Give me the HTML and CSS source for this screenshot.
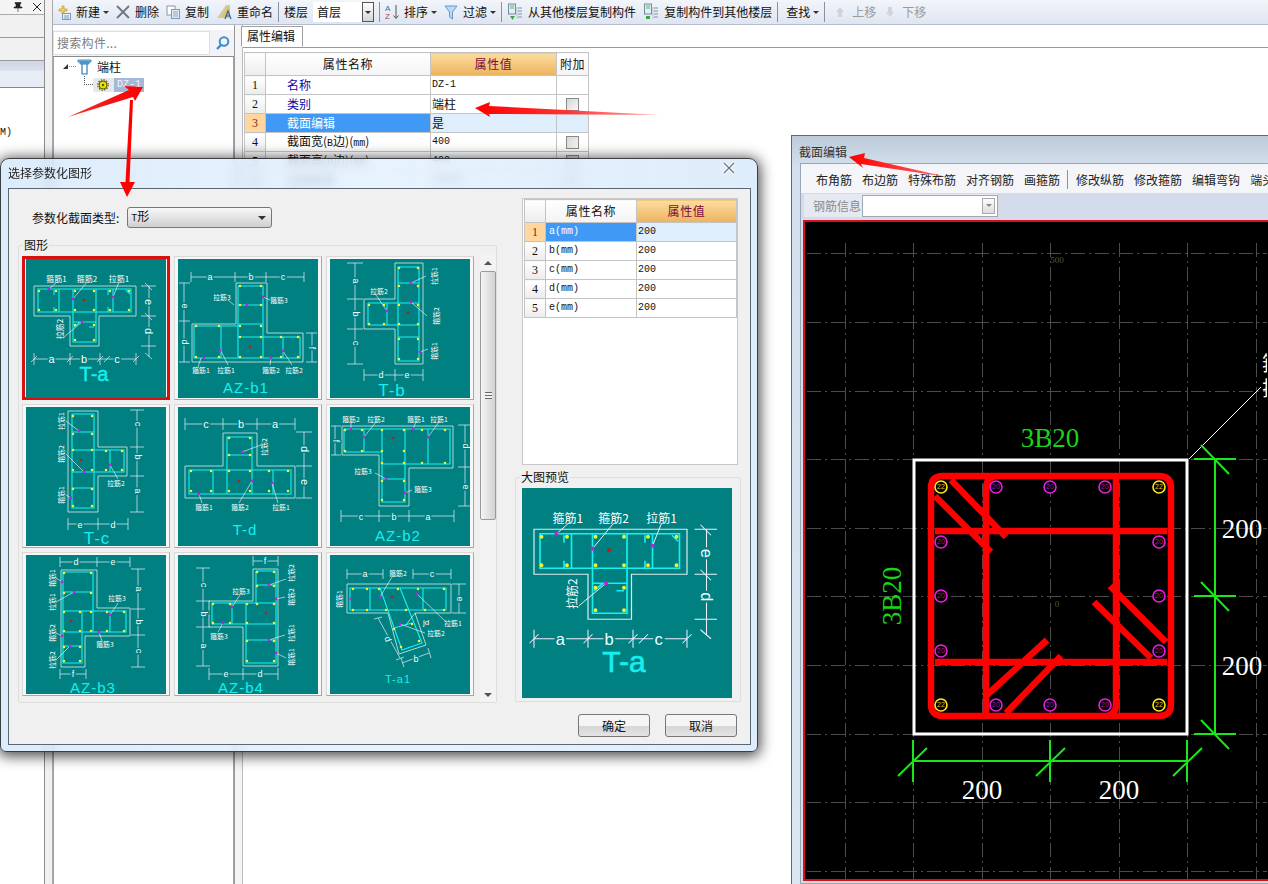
FILE: index.html
```html
<!DOCTYPE html>
<html lang="zh-CN">
<head>
<meta charset="utf-8">
<title>选择参数化图形</title>
<link rel="stylesheet" href="styles.css">
</head>
<body>
<svg class="defs" width="0" height="0">
  <defs>
    <linearGradient id="arrowA" gradientUnits="userSpaceOnUse" x1="68" y1="117" x2="143" y2="87"><stop offset="0" stop-color="#f33"/><stop offset=".5" stop-color="#f01818"/><stop offset="1" stop-color="#f00"/></linearGradient>
    <linearGradient id="arrowB" gradientUnits="userSpaceOnUse" x1="660" y1="115" x2="475" y2="108"><stop offset="0" stop-color="#ffb0b0"/><stop offset=".5" stop-color="#f33"/><stop offset="1" stop-color="#f00"/></linearGradient>
    <linearGradient id="arrowC" gradientUnits="userSpaceOnUse" x1="947" y1="177" x2="849" y2="157"><stop offset="0" stop-color="#f66"/><stop offset="1" stop-color="#f00"/></linearGradient>

    <symbol id="t-a" viewBox="0 0 140 139">
      <path class="o" d="M8 27H110V57H73V87H44V57H8Z"/>
      <path class="r" d="M12 30H105V53H12ZM47 30V83H70V30M47 63H70M33 30V53M87 30V53M28 31V36M28 48V53M82 31V36M82 48V53M100 31L104 35M54 63L48 68M63 68H68"/>
      <path class="yd" d="M13 32h0M30 32h0M49 32h0M68 32h0M84 32h0M103 32h0M13 51h0M30 51h0M49 51h0M68 51h0M84 51h0M103 51h0M49 66h0M68 66h0M49 81h0M68 81h0"/>
      <path class="ld" d="M23 30L31 23M47 40L61 23M87 38L93 23M38 78L56 63"/>
      <path class="pd" d="M23 30h0M47 40h0M87 38h0M56 63h0"/>
      <path class="rd" d="M58 41h0"/>
      <path class="d" d="M8 100H110M8 94V106M44 94V106M74 94V106M110 94V106M5 103L11 97M41 103L47 97M71 103L77 97M78 103L84 97M107 103L113 97M123 27V98M115 27H130M115 57H130M115 87H130M119 24L126 31M119 54L126 61M119 94L126 100"/>
      <text class="l big" x="25.5" y="100">a</text><text class="l big" x="58" y="100">b</text><text class="l big" x="91" y="100">c</text>
      <text class="l big" x="123" y="43" transform="rotate(90 123 43)">e</text><text class="l big" x="123" y="72" transform="rotate(90 123 72)">d</text>
      <text class="tx" x="30.5" y="19">箍筋1</text><text class="tx" x="61" y="19">箍筋2</text><text class="tx" x="93" y="19">拉筋1</text>
      <text class="tx" x="33" y="70" transform="rotate(-90 33 70)">拉筋2</text>
      <text class="ti ti-l" x="68" y="115">T-a</text>
    </symbol>

    <symbol id="az-b1" viewBox="0 0 140 139">
      <path class="o" d="M14 65H58V24H89V74H125V103H14Z"/>
      <path class="r" d="M16 67H43V99H16ZM43 99H122V78H60M60 27H85V99M60 27V99M60 46H85M60 65H85M85 78H122M105 78V99M43 67H60"/>
      <path class="yd" d="M18 67h0M41 67h0M62 67h0M83 67h0M62 27h0M83 27h0M62 46h0M83 46h0M62 78h0M83 78h0M18 98h0M41 98h0M62 98h0M83 98h0M103 78h0M120 78h0M103 98h0M120 98h0"/>
      <path class="ld" d="M23 99L20 108M43 92L50 106M93 99L92 106M105 92L114 106M56 46L50 41M85 38L92 41"/>
      <path class="pd" d="M26 99h0M42 92h0M93 99h0M105 92h0M69 46h0M85 38h0"/>
      <path class="rd" d="M72 88h0"/>
      <path class="d" d="M13 18H126M13 13V23M57 13V23M88 13V23M126 13V23M6 24V103M1 24H12M1 62H12M1 103H12M134 74V103M128 74H139M128 103H139"/>
      <text class="l" x="32" y="18">a</text><text class="l" x="73" y="18">b</text><text class="l" x="105" y="18">c</text>
      <text class="l" x="7" y="47" transform="rotate(90 7 47)">e</text><text class="l" x="7" y="83" transform="rotate(90 7 83)">d</text><text class="l" x="134" y="89" transform="rotate(90 134 89)">f</text>
      <text class="tx s" x="23" y="111">箍筋1</text><text class="tx s" x="48" y="111">拉筋1</text><text class="tx s" x="93" y="111">箍筋2</text><text class="tx s" x="116" y="111">拉筋2</text><text class="tx s" x="44" y="38">拉筋3</text><text class="tx s" x="101" y="41">箍筋3</text>
      <text class="ti" x="68" y="128">AZ-b1</text>
    </symbol>

    <symbol id="t-b" viewBox="0 0 140 139">
      <path class="o" d="M65 4H93V105H65V70H34V40H65Z"/>
      <path class="r" d="M68 8H89V102H68ZM68 24H89M68 44H89M68 66H89M68 78H89M38 44H68M38 66H68M38 44V66M57 44V66"/>
      <path class="yd" d="M69 9h0M88 9h0M69 27h0M88 27h0M69 46h0M88 46h0M69 65h0M88 65h0M69 80h0M88 80h0M69 100h0M88 100h0M39 46h0M54 46h0M39 65h0M54 65h0"/>
      <path class="ld" d="M81 24L96 17M81 43L97 57M90 93L98 90M46 36L57 52"/>
      <path class="pd" d="M81 24h0M81 43h0M90 93h0M57 52h0"/>
      <path class="rd" d="M78 54h0"/>
      <path class="d" d="M25 4V105M17 4H33M17 40H33M17 70H33M17 105H33M34 116H93M34 110V122M65 110V122M93 110V122"/>
      <text class="l" x="26" y="22" transform="rotate(90 26 22)">a</text><text class="l" x="26" y="55" transform="rotate(90 26 55)">b</text><text class="l" x="26" y="84" transform="rotate(90 26 84)">c</text><text class="l" x="51" y="116">d</text><text class="l" x="77" y="116">e</text>
      <text class="tx s" x="104" y="17" transform="rotate(-90 104 17)">拉筋1</text><text class="tx s" x="49" y="32">拉筋2</text><text class="tx s" x="106" y="57" transform="rotate(-90 106 57)">箍筋2</text><text class="tx s" x="104" y="92" transform="rotate(-90 104 92)">箍筋1</text>
      <text class="ti ti-m" x="62" y="131">T-b</text>
    </symbol>

    <symbol id="t-c" viewBox="0 0 140 139">
      <path class="o" d="M42 4H72V40H101V69H72V105H42Z"/>
      <path class="r" d="M46 7H68V101H46ZM46 25H68M46 43H98V65H46ZM46 81H68M84 43V65M68 43V65"/>
      <path class="yd" d="M47 9h0M66 9h0M47 27h0M66 27h0M47 43h0M66 43h0M47 63h0M66 63h0M47 82h0M66 82h0M47 99h0M66 99h0M80 44h0M96 44h0M80 63h0M96 63h0"/>
      <path class="ld" d="M40 14L53 24M40 47L58 65M40 88L45 91M84 58L92 72"/>
      <path class="pd" d="M53 24h0M58 65h0M45 91h0M84 58h0"/>
      <path class="rd" d="M55 53h0"/>
      <path class="d" d="M111 3V105M104 3H118M104 40H118M104 69H118M104 105H118M42 117H102M42 111V123M72 111V123M102 111V123"/>
      <text class="l" x="112" y="17" transform="rotate(90 112 17)">c</text><text class="l" x="112" y="50" transform="rotate(90 112 50)">b</text><text class="l" x="112" y="84" transform="rotate(90 112 84)">a</text><text class="l" x="54" y="118">e</text><text class="l" x="87" y="118">d</text>
      <text class="tx s" x="35" y="14" transform="rotate(-90 35 14)">拉筋1</text><text class="tx s" x="35" y="47" transform="rotate(-90 35 47)">箍筋2</text><text class="tx s" x="35" y="88" transform="rotate(-90 35 88)">箍筋1</text><text class="tx s" x="90" y="76">拉筋2</text>
      <text class="ti ti-m" x="71" y="131">T-c</text>
    </symbol>

    <symbol id="t-d" viewBox="0 0 140 139">
      <path class="o" d="M45 26H79V59H117V91H7V59H45Z"/>
      <path class="r" d="M49 30H74V87H49ZM49 48H74M11 63H113V87H11ZM35 63V87M95 63V87"/>
      <path class="yd" d="M51 31h0M72 31h0M51 48h0M72 48h0M13 64h0M33 64h0M51 64h0M72 64h0M91 64h0M110 64h0M13 84h0M33 84h0M51 84h0M72 84h0M91 84h0M110 84h0"/>
      <path class="ld" d="M64 45L83 38M21 87L24 96M74 74L61 96M94 76L100 96"/>
      <path class="pd" d="M21 87h0M74 74h0M64 45h0M94 76h0"/>
      <path class="rd" d="M61 74h0"/>
      <path class="d" d="M7 17H117M7 11V23M45 11V23M79 11V23M117 11V23M126 25V91M118 25H134M118 59H134M118 91H134"/>
      <text class="l big" x="28" y="17">c</text><text class="l big" x="63" y="17">b</text><text class="l big" x="97" y="17">a</text><text class="l big" x="127" y="42" transform="rotate(90 127 42)">d</text><text class="l big" x="127" y="75" transform="rotate(90 127 75)">e</text>
      <text class="tx s" x="26" y="100">箍筋1</text><text class="tx s" x="62" y="100">箍筋2</text><text class="tx s" x="103" y="100">拉筋1</text><text class="tx s" x="86" y="40" transform="rotate(-90 86 40)">拉筋2</text>
      <text class="ti ti-s" x="67" y="122">T-d</text>
    </symbol>

    <symbol id="az-b2" viewBox="0 0 140 139">
      <path class="o" d="M12 19H123V61H79V99H49V48H12Z"/>
      <path class="r" d="M14 22H120V57H52V45H14ZM52 22V95H75V22M34 22V45M98 22V57M52 72H75M52 95H75"/>
      <path class="yd" d="M15 23h0M32 23h0M52 23h0M74 23h0M92 23h0M115 23h0M15 44h0M32 44h0M52 44h0M74 44h0M52 56h0M74 56h0M92 56h0M115 56h0M52 74h0M74 74h0M52 93h0M74 93h0"/>
      <path class="ld" d="M21 22L21 15M34 30L46 15M83 22L86 15M98 30L109 15M45 66L56 72M75 86L82 83"/>
      <path class="pd" d="M21 22h0M34 30h0M83 22h0M98 30h0M56 72h0M75 86h0"/>
      <path class="rd" d="M63 31h0"/>
      <path class="d" d="M11 109H124M11 103V115M49 103V115M79 103V115M124 103V115M135 18V99M128 18H141M128 60H141M128 99H141M5 19V48M1 19H11M1 48H11"/>
      <text class="l" x="31" y="110">c</text><text class="l" x="64" y="110">b</text><text class="l" x="98" y="110">a</text><text class="l" x="136" y="39" transform="rotate(90 136 39)">d</text><text class="l" x="136" y="80" transform="rotate(90 136 80)">e</text><text class="l" x="6" y="34" transform="rotate(90 6 34)">f</text>
      <text class="tx s" x="21" y="12">箍筋2</text><text class="tx s" x="46" y="12">拉筋2</text><text class="tx s" x="86" y="12">箍筋1</text><text class="tx s" x="109" y="12">拉筋1</text><text class="tx s" x="33" y="64">拉筋3</text><text class="tx s" x="93" y="82">箍筋3</text>
      <text class="ti" x="68" y="128">AZ-b2</text>
    </symbol>

    <symbol id="az-b3" viewBox="0 0 140 139">
      <path class="o" d="M35 15H71V53H104V81H59V112H35Z"/>
      <path class="r" d="M37 17H67V56H100V77H37ZM37 56V108H56V77M37 37H67M37 56H67M37 91H56M37 108H56M56 56V77M84 56V77M67 56V77"/>
      <path class="yd" d="M38 18h0M65 18h0M38 38h0M65 38h0M38 57h0M54 57h0M65 57h0M81 57h0M98 57h0M38 76h0M54 76h0M65 76h0M81 76h0M98 76h0M38 92h0M54 92h0M38 106h0M54 106h0"/>
      <path class="ld" d="M30 23L36 27M30 47L48 37M30 78L36 81M30 105L44 91M84 60L92 48M73 77L76 86"/>
      <path class="pd" d="M36 27h0M48 37h0M36 81h0M44 91h0M84 60h0M73 77h0"/>
      <path class="rd" d="M45 66h0"/>
      <path class="d" d="M34 7H104M34 2V12M71 2V12M104 2V12M112 14V112M105 14H119M105 54H119M105 80H119M105 112H119M34 119H60M34 114V124M60 114V124"/>
      <text class="l" x="50" y="7">d</text><text class="l" x="87" y="7">e</text><text class="l" x="113" y="34" transform="rotate(90 113 34)">a</text><text class="l" x="113" y="67" transform="rotate(90 113 67)">b</text><text class="l" x="113" y="96" transform="rotate(90 113 96)">c</text><text class="l" x="47" y="119">f</text>
      <text class="tx s" x="26" y="23" transform="rotate(-90 26 23)">箍筋1</text><text class="tx s" x="26" y="47" transform="rotate(-90 26 47)">拉筋1</text><text class="tx s" x="26" y="78" transform="rotate(-90 26 78)">箍筋2</text><text class="tx s" x="26" y="105" transform="rotate(-90 26 105)">拉筋2</text><text class="tx s" x="91" y="43">拉筋3</text><text class="tx s" x="79" y="89">箍筋3</text>
      <text class="ti" x="67" y="132">AZ-b3</text>
    </symbol>

    <symbol id="az-b4" viewBox="0 0 140 139">
      <path class="o" d="M75 14H100V111H65V72H31V46H75Z"/>
      <path class="r" d="M78 16H98V108H68V48H34V69H98M78 16V48M78 30H98M68 48H98M68 85H98M54 48V69"/>
      <path class="yd" d="M79 17h0M96 17h0M79 31h0M96 31h0M35 49h0M52 49h0M69 49h0M79 49h0M96 49h0M35 68h0M52 68h0M69 68h0M96 68h0M69 86h0M96 86h0M69 106h0M96 106h0"/>
      <path class="ld" d="M91 30L108 24M98 44L107 42M91 85L107 80M98 98L108 103M54 52L62 40M45 68L40 77"/>
      <path class="pd" d="M91 30h0M98 44h0M91 85h0M98 98h0M54 52h0M45 68h0"/>
      <path class="rd" d="M88 58h0"/>
      <path class="d" d="M25 13V111M18 13H32M18 46H32M18 72H32M18 111H32M75 6H100M75 1V11M100 1V11M31 119H100M31 113V125M65 113V125M100 113V125"/>
      <text class="l" x="26" y="30" transform="rotate(90 26 30)">c</text><text class="l" x="26" y="59" transform="rotate(90 26 59)">b</text><text class="l" x="26" y="91" transform="rotate(90 26 91)">a</text><text class="l" x="87" y="6">f</text><text class="l" x="48" y="119">e</text><text class="l" x="82" y="119">d</text>
      <text class="tx s" x="113" y="18" transform="rotate(-90 113 18)">拉筋2</text><text class="tx s" x="113" y="42" transform="rotate(-90 113 42)">箍筋2</text><text class="tx s" x="113" y="78" transform="rotate(-90 113 78)">拉筋1</text><text class="tx s" x="113" y="102" transform="rotate(-90 113 102)">箍筋1</text><text class="tx s" x="63" y="36">拉筋3</text><text class="tx s" x="41" y="81">箍筋3</text>
      <text class="ti" x="63" y="132">AZ-b4</text>
    </symbol>

    <symbol id="t-a1" viewBox="0 0 140 139">
      <path class="o" d="M17 29H121V58H85L96 90L69 99L58 58H17Z"/>
      <path class="r" d="M20 33H116V55H20ZM40 33V55M93 33V55M50 33L72 95L92 88L70 33M64 73L82 68"/>
      <path class="yd" d="M23 34h0M37 34h0M49 34h0M68 34h0M88 34h0M114 34h0M23 55h0M37 55h0M56 55h0M76 55h0M95 55h0M114 55h0M64 74h0M82 69h0M71 92h0M89 86h0"/>
      <path class="ld" d="M50 42L62 22M87 39L115 66M70 69L95 78"/>
      <path class="pd" d="M21 44h0M50 42h0M87 39h0M70 69h0"/>
      <path class="rd" d="M62 42h0"/>
      <path class="d" d="M17 19H53M17 14V24M53 14V24M83 19H121M83 14V24M121 14V24M129 29V58M122 29H136M122 58H136M48 63L70 103M44 64L52 62M66 105L74 102M72 108L99 98M71 103L74 112M98 93L101 103M85 58L76 70"/>
      <text class="l" x="35" y="19">a</text><text class="l" x="102" y="19">c</text><text class="l" x="130" y="44" transform="rotate(90 130 44)">e</text><text class="l" x="86" y="104">b</text><text class="l" x="58" y="84" transform="rotate(70 58 84)">d</text>
      <text class="tx s" x="68" y="18">箍筋2</text><text class="tx s" x="9" y="44" transform="rotate(-90 9 44)">箍筋1</text><text class="tx s" x="123" y="68">拉筋1</text><text class="tx s" x="106" y="78">拉筋2</text><text class="tx n" x="96" y="67">jd</text>
      <text class="ti ti-t" x="68" y="124">T-a1</text>
    </symbol>
  </defs>
</svg>

<div class="app">
  <aside class="dock">
    <div class="dock-title">
      <svg class="ic" width="10" height="12" viewBox="0 0 10 12"><path class="line-dark" d="M2 1.5H8V2.5H7V6H9V7H1V6H3V2.5H2ZM5 7V11"/></svg>
      <svg class="ic" width="10" height="10" viewBox="0 0 10 10"><path class="line-dark thin" d="M1 1L9 9M9 1L1 9"/></svg>
    </div>
    <div class="dock-row"></div>
    <div class="dock-row"></div>
    <div class="dock-head"></div>
    <div class="dock-list"><span class="mono">M)</span></div>
  </aside>
  <div class="gutter"></div>

  <div class="work">
    <nav class="toolbar">
      <div class="tb">
        <svg class="ic" width="14" height="16" viewBox="0 0 14 16"><path d="M5 2V5H2V7H5V10H7V7H10V5H7V2Z" fill="#f3d25a" stroke="#b89020" stroke-width=".6"/><rect x="5.5" y="9.5" width="8" height="6" fill="#e4edf7" stroke="#7d9cbd"/><path d="M7 12H12M7 14H12" stroke="#7d9cbd"/></svg>
        <span>新建</span><i class="caret"></i>
      </div>
      <div class="tb">
        <svg class="ic" width="14" height="14" viewBox="0 0 14 14"><path d="M1 1L13 13M13 1L1 13" stroke="#6d7681" stroke-width="1.8"/></svg>
        <span>删除</span>
      </div>
      <div class="tb">
        <svg class="ic" width="14" height="14" viewBox="0 0 14 14"><rect x="1" y="1" width="8" height="9" fill="#fff" stroke="#8a95a5"/><rect x="5.5" y="4.5" width="8" height="9" fill="#dfe8f5" stroke="#7d9cbd"/><path d="M7 7H12M7 9H12M7 11H12" stroke="#9ab"/></svg>
        <span>复制</span>
      </div>
      <div class="tb">
        <svg class="ic" width="16" height="16" viewBox="0 0 16 16"><path d="M1 14L10 1H14V14Z" fill="#c8cfa8"/><path d="M5 13L11 3H14V8L10 13Z" fill="#e3c560"/><path d="M9 15L12 7L15 15M10 12H14" fill="none" stroke="#34619c" stroke-width="1.2"/></svg>
        <span>重命名</span>
      </div>
      <i class="sep"></i>
      <div class="tb">
        <span>楼层</span>
        <div class="floor"><span>首层</span><b class="floor-btn"><i class="caret dark"></i></b></div>
      </div>
      <i class="sep"></i>
      <div class="tb">
        <svg class="ic" width="14" height="16" viewBox="0 0 14 16"><text class="sort-a" x="0" y="7">A</text><text class="sort-z" x="0" y="15">Z</text><path d="M11 1V14M8.500 11.500L11 14.500L13.500 11.500" fill="none" stroke="#555"/></svg>
        <span>排序</span><i class="caret"></i>
      </div>
      <div class="tb">
        <svg class="ic" width="14" height="15" viewBox="0 0 14 15"><path d="M1 1H13L8.500 7V14L5.500 12V7Z" fill="#bdd8f0" stroke="#5f9ad0"/></svg>
        <span>过滤</span><i class="caret"></i>
      </div>
      <i class="sep"></i>
      <div class="tb">
        <svg class="ic" width="16" height="18" viewBox="0 0 16 18"><rect x="1.500" y="1" width="7" height="10" fill="#e5edf7" stroke="#7389a3"/><path d="M3 3H7M3 5H7" stroke="#58c058"/><path d="M3 13H8L5.500 17Z" fill="#3fa648"/><path d="M11 5H15M11 8H15M11 11H15M11 14H15" stroke="#7d93aa"/><path d="M10 4V16" stroke="#b5c2d0"/></svg>
        <span>从其他楼层复制构件</span>
      </div>
      <div class="tb">
        <svg class="ic" width="16" height="18" viewBox="0 0 16 18"><rect x="1.500" y="1" width="7" height="10" fill="#e5edf7" stroke="#7389a3"/><path d="M3 3H7M3 5H7" stroke="#58c058"/><path d="M3 13H7V16H3Z" fill="#3fa648"/><path d="M11 5H15M11 8H15M11 11H15M11 14H15" stroke="#7d93aa"/><path d="M10 4V16" stroke="#b5c2d0"/></svg>
        <span>复制构件到其他楼层</span>
      </div>
      <i class="sep"></i>
      <div class="tb tb-pad">
        <span>查找</span><i class="caret"></i>
      </div>
      <i class="sep"></i>
      <div class="tb tb-pad off">
        <svg class="ic" width="14" height="12" viewBox="0 0 14 12"><path d="M7 1L11 6H9V11H5V6H3Z" fill="#cfd4dc"/></svg>
        <span>上移</span>
      </div>
      <div class="tb off">
        <svg class="ic" width="14" height="12" viewBox="0 0 14 12"><path d="M7 11L3 6H5V1H9V6H11Z" fill="#cfd4dc"/></svg>
        <span>下移</span>
      </div>
    </nav>

    <div class="panes">
      <section class="tree-pane">
        <div class="search">
          <div class="search-box">搜索构件...</div>
          <svg class="ic search-ic" width="16" height="16" viewBox="0 0 16 16"><circle cx="9" cy="6.500" r="4.300" fill="none" stroke="#3f8bc9" stroke-width="2"/><path d="M6 10L2 14" stroke="#3f8bc9" stroke-width="2.400"/></svg>
        </div>
        <div class="tree">
          <div class="node">
            <i class="twist"></i><i class="dots-h"></i>
            <svg class="ic" width="15" height="16" viewBox="0 0 15 16"><path d="M1 1H14V3H1ZM3 3H12V5H3Z" fill="#8fc6e8" stroke="#2f78b5" stroke-width=".8"/><path d="M5 5H10V15H5Z" fill="#fff" stroke="#2f78b5" stroke-width="1.200"/></svg>
            <span>端柱</span>
          </div>
          <div class="node leaf">
            <i class="dots-l"></i>
            <div class="leaf-box">
              <svg class="ic" width="12" height="12" viewBox="0 0 12 12"><circle cx="6" cy="6" r="4" fill="#e8e000" stroke="#5a5a00"/><circle cx="6" cy="6" r="5.200" fill="none" stroke="#5a5a00" stroke-width="1.200" stroke-dasharray="1.500 1.200"/><circle cx="6" cy="6" r="1.200" fill="#5a5a00"/></svg>
              <span class="leaf-name mono">DZ-1</span>
            </div>
          </div>
        </div>
      </section>
      <div class="gutter gutter-b"></div>

      <section class="prop-pane">
        <div class="tabs"><div class="tab">属性编辑</div></div>
        <table class="grid main-grid">
          <colgroup><col class="c-no"><col class="c-name"><col class="c-val"><col class="c-add"></colgroup>
          <thead><tr><th class="no"></th><th>属性名称</th><th class="hot">属性值</th><th>附加</th></tr></thead>
          <tbody>
            <tr><td class="no">1</td><td class="name blue">名称</td><td class="val mono">DZ-1</td><td></td></tr>
            <tr><td class="no">2</td><td class="name blue">类别</td><td class="val">端柱</td><td class="chk"><i class="box"></i></td></tr>
            <tr class="sel"><td class="no">3</td><td class="name">截面编辑</td><td class="val">是</td><td></td></tr>
            <tr><td class="no">4</td><td class="name">截面宽(<span class="mono">B</span>边)(<span class="mono">mm</span>)</td><td class="val mono">400</td><td class="chk"><i class="box"></i></td></tr>
            <tr><td class="no">5</td><td class="name">截面高(<span class="mono">H</span>边)(<span class="mono">mm</span>)</td><td class="val mono">400</td><td class="chk"><i class="box"></i></td></tr>
            <tr><td class="no">6</td><td class="name">全部纵筋</td><td class="val mono">20B20</td><td class="chk"><i class="box"></i></td></tr>
            <tr><td class="no">7</td><td class="name">箍筋</td><td class="val mono">A8@200</td><td class="chk"><i class="box"></i></td></tr>
          </tbody>
        </table>
      </section>
    </div>
  </div>
</div>

<section class="section-win">
  <header class="sec-title">截面编辑</header>
  <div class="sec-body">
    <div class="sec-tools">
      <span>布角筋</span><span>布边筋</span><span>特殊布筋</span><span>对齐钢筋</span><span>画箍筋</span><i class="sep sec-sep"></i><span>修改纵筋</span><span>修改箍筋</span><span>编辑弯钩</span><span>端头弯钩</span>
    </div>
    <div class="sec-info">
      <div class="info-bar"><span class="info-label">钢筋信息</span><div class="info-combo"><b class="info-btn"><i class="caret grey"></i></b></div></div>
    </div>
    <div class="canvas">
      <svg class="canvas-svg" viewBox="806 222 462 658" width="462" height="658">
        <path class="grid-line" d="M808 253H1268M808 322H1268M808 391H1268M808 459H1268M808 528H1268M808 596H1268M808 665H1268M808 734H1268M808 802H1268M808 871H1268M846 243V880M914 243V880M983 243V880M1051 243V880M1120 243V880M1188 243V880M1257 243V880"/>
        <text class="cv-small" x="1058" y="263">500</text>
        <text class="cv-small" x="1058" y="607">0</text>
        <rect class="cv-box" x="915" y="460" width="273" height="274"/>
        <path class="cv-leader" d="M1190 459L1262 387"/>
        <path class="cv-bar" d="M944 476H1160Q1172 476 1172 488V704Q1172 716 1160 716H944Q932 716 932 704V488Q932 476 944 476ZM987 716Q987 706 987 700V490Q987 476 998 476M1117 476V705Q1117 714 1108 716M936 531H1168M936 662H1168M936 496L992 552M952 480L1007 537M1095 602L1152 658M1111 586L1167 642M988 695L1048 640M1007 713L1062 656"/>
        <g class="cv-c-y"><circle cx="942" cy="487" r="6"/><circle cx="1160" cy="487" r="6"/><circle cx="942" cy="705" r="6"/><circle cx="1160" cy="705" r="6"/></g>
        <g class="cv-c-m"><circle cx="997" cy="487" r="6"/><circle cx="1051" cy="487" r="6"/><circle cx="1106" cy="487" r="6"/><circle cx="942" cy="542" r="6"/><circle cx="1160" cy="542" r="6"/><circle cx="942" cy="596" r="6"/><circle cx="1160" cy="596" r="6"/><circle cx="942" cy="651" r="6"/><circle cx="1160" cy="651" r="6"/><circle cx="997" cy="705" r="6"/><circle cx="1051" cy="705" r="6"/><circle cx="1106" cy="705" r="6"/></g>
        <g class="cv-n-y"><text x="942" y="489">22</text><text x="1160" y="489">22</text><text x="942" y="707">22</text><text x="1160" y="707">22</text></g>
        <g class="cv-n-m"><text x="997" y="489">20</text><text x="1051" y="489">20</text><text x="1106" y="489">20</text><text x="942" y="544">20</text><text x="1160" y="544">20</text><text x="942" y="598">20</text><text x="1160" y="598">20</text><text x="942" y="653">20</text><text x="1160" y="653">20</text><text x="997" y="707">20</text><text x="1051" y="707">20</text><text x="1106" y="707">20</text></g>
        <path class="cv-dim" d="M1216 459V734M1195 459H1237M1195 596H1237M1195 734H1237M1202 445L1230 474M1202 582L1230 611M1202 720L1230 749M914 761H1188M914 740V782M1051 740V782M1188 740V782M899 776L928 748M1037 776L1066 748M1174 776L1203 748"/>
        <text class="cv-green" x="1051" y="447">3B20</text>
        <text class="cv-green" x="902" y="596" transform="rotate(-90 902 596)">3B20</text>
        <text class="cv-white" x="1243" y="538">200</text>
        <text class="cv-white" x="1243" y="675">200</text>
        <text class="cv-white" x="983" y="799">200</text>
        <text class="cv-white" x="1120" y="799">200</text>
        <text class="cv-cut" x="1263" y="371">箍</text>
        <text class="cv-cut" x="1263" y="396">拉</text>
      </svg>
    </div>
  </div>
</section>

<section class="dialog">
  <header class="dlg-title">
    <span>选择参数化图形</span>
    <svg class="dlg-x" width="12" height="12" viewBox="0 0 12 12"><path d="M1 1L11 11M11 1L1 11" stroke="#fff" stroke-width="3"/><path d="M1 1L11 11M11 1L1 11" stroke="#66727f" stroke-width="1.200"/></svg>
  </header>
  <div class="dlg-body">
    <div class="dlg-left">
      <div class="type-row">
        <label>参数化截面类型:</label>
        <div class="type-select"><span><span class="mono">T</span>形</span><i class="caret dark big-caret"></i></div>
      </div>
      <fieldset class="group shapes">
        <legend>图形</legend>
        <div class="shapes-in">
          <div class="thumbs">
            <div class="thumb on"><svg class="pic"><use href="#t-a"/></svg></div>
            <div class="thumb"><svg class="pic"><use href="#az-b1"/></svg></div>
            <div class="thumb"><svg class="pic"><use href="#t-b"/></svg></div>
            <div class="thumb"><svg class="pic"><use href="#t-c"/></svg></div>
            <div class="thumb"><svg class="pic"><use href="#t-d"/></svg></div>
            <div class="thumb"><svg class="pic"><use href="#az-b2"/></svg></div>
            <div class="thumb"><svg class="pic"><use href="#az-b3"/></svg></div>
            <div class="thumb"><svg class="pic"><use href="#az-b4"/></svg></div>
            <div class="thumb"><svg class="pic"><use href="#t-a1"/></svg></div>
          </div>
          <div class="scroll">
            <i class="sc-up"></i>
            <div class="sc-thumb"><i class="sc-grip"></i></div>
            <i class="sc-down"></i>
          </div>
        </div>
      </fieldset>
    </div>
    <div class="dlg-right">
      <div class="param-panel">
        <table class="grid param-grid">
          <colgroup><col class="p-no"><col class="p-name"><col class="p-val"></colgroup>
          <thead><tr><th class="no"></th><th>属性名称</th><th class="hot">属性值</th></tr></thead>
          <tbody>
            <tr class="sel"><td class="no">1</td><td class="mono pn">a(mm)</td><td class="val mono">200</td></tr>
            <tr><td class="no">2</td><td class="mono pn">b(mm)</td><td class="val mono">200</td></tr>
            <tr><td class="no">3</td><td class="mono pn">c(mm)</td><td class="val mono">200</td></tr>
            <tr><td class="no">4</td><td class="mono pn">d(mm)</td><td class="val mono">200</td></tr>
            <tr><td class="no">5</td><td class="mono pn">e(mm)</td><td class="val mono">200</td></tr>
          </tbody>
        </table>
      </div>
      <fieldset class="group preview">
        <legend>大图预览</legend>
        <svg class="pic pic-big"><use href="#t-a"/></svg>
      </fieldset>
    </div>
    <div class="dlg-foot">
      <button class="btn">确定</button>
      <button class="btn">取消</button>
    </div>
  </div>
</section>

<svg class="arrows" width="1268" height="884" viewBox="0 0 1268 884">
  <path fill="url(#arrowA)" d="M68 117L129 90L124 86L143 87L135 101L133 97Z"/>
  <path fill="#f00" d="M130 100H133L129.500 182H135L127 197L120 182H125.500Z"/>
  <path fill="url(#arrowB)" d="M475 108L490 102L489 106L660 115L489 114L490 117Z"/>
  <path fill="url(#arrowC)" d="M849 157L865 153L864 158L947 177L861 164L863 168Z"/>
</svg>
</body>
</html>
```

FILE: styles.css
```css
* { box-sizing: border-box; }
html, body { margin: 0; padding: 0; background: #fff; }
body {
  width: 1268px; height: 884px; position: relative; overflow: hidden;
  font: 12px/14px "Noto Sans CJK SC", "Liberation Sans", sans-serif; color: #111;
}
i { display: block; font-style: normal; }
.defs { position: absolute; }
.ic { flex: none; display: block; }
.mono { font-family: "Liberation Mono", "Noto Sans CJK SC", monospace; font-size: 10px; }

.app { display: flex; width: 1268px; height: 884px; }

/* left dock */
.dock { width: 45px; flex: none; display: flex; flex-direction: column; border-right: 1px solid #8c8c8c; }
.dock-title { height: 15px; background: #f4f4f4; border-bottom: 1px solid #aaa; display: flex; justify-content: flex-end; align-items: center; gap: 9px; padding-right: 2px; }
.dock-row { height: 23px; background: #f1f1f1; border-bottom: 1px solid #999; }
.dock-head { height: 27px; background: linear-gradient(#cfd6e4 0, #d9e0ec 35%, #e9edf5 40%, #e6ebf5 100%); border-bottom: 1px solid #888; }
.dock-list { flex: 1; background: #fff; padding-top: 35px; }
.line-dark { fill: #222; stroke: #222; stroke-width: .6; }
.thin { stroke-width: 1; fill: none; }

.gutter { width: 8px; flex: none; background: #f1f1f3; border-right: 1px solid #aaa; }
.gutter-b { width: 9px; border-left: 1px solid #999; border-right: 1px solid #bbb; background: #f4f4f6; }

.work { flex: 1; min-width: 0; display: flex; flex-direction: column; }

/* toolbar */
.toolbar {
  height: 25px; flex: none; display: flex; align-items: center; gap: 7px; padding-left: 4px;
  background: linear-gradient(#f2f5fa, #dfe5f1); border-bottom: 1px solid #b4bccb; white-space: nowrap;
}
.tb { display: flex; align-items: center; gap: 5px; }
.tb-pad { margin-left: 3px; }
.off { color: #9a9a9a; }
.caret { width: 0; height: 0; margin: 0 0 0 -2px; border: 3px solid transparent; border-top: 3px solid #333; border-bottom: 0; }
.caret.dark { margin: 0; }
.caret.grey { margin: 0; border-top-color: #888; }
.sep { width: 1px; height: 20px; background: #8892a0; margin: 0 -2px; flex: none; }
.floor { width: 61px; height: 20px; display: flex; justify-content: space-between; align-items: center; background: #fff; padding-left: 4px; }
.floor-btn { width: 12px; height: 20px; display: flex; align-items: center; justify-content: center; background: linear-gradient(#fff, #d5d5d5); border: 1px solid #555; }
.sort-a, .sort-z { font: 8px "Liberation Sans", sans-serif; }
.sort-a { fill: #2f6cb5; }
.sort-z { fill: #b04040; }

/* panes */
.panes { flex: 1; min-height: 0; display: flex; }
.tree-pane { width: 181px; flex: none; display: flex; flex-direction: column; background: #fff; padding-top: 5px; }
.search { height: 26px; flex: none; display: flex; align-items: center; gap: 5px; background: #f2f3f6; }
.search-box { width: 157px; height: 24px; background: #fff; border: 1px solid #dcdfe4; color: #7c7c7c; padding: 4px 3px; letter-spacing: .3px; }
.tree { flex: 1; border: 1px solid #a3a3a3; border-top-color: #8a8a8a; border-bottom: 0; padding-top: 1px; }
.node { height: 17px; display: flex; align-items: center; padding-left: 9px; }
.node span { margin-left: 5px; }
.twist { width: 0; height: 0; border-style: solid; border-width: 0 0 5px 5px; border-color: transparent transparent #333 transparent; }
.dots-h { width: 7px; margin: 0 1px; border-top: 1px dotted #888; }
.leaf { margin-top: 1px; padding-left: 30px; }
.dots-l { width: 9px; height: 9px; margin-top: -8px; border-left: 1px dotted #555; border-bottom: 1px dotted #555; }
.leaf-box { display: flex; align-items: center; height: 14px; background: #e6e8ec; border-radius: 2px; padding-left: 4px; }
.leaf-box .leaf-name { margin-left: 5px; padding: 0 3px; flex: none; white-space: nowrap; line-height: 14px; background: #a4b9d9; color: #f2f5fa; }

.prop-pane { flex: 1; min-width: 0; }
.tabs { height: 22px; margin-top: 1px; border-bottom: 1px solid #9a9a9a; }
.tab { width: 62px; height: 21px; margin-left: -2px; background: #fff; border: 1px solid #a0a0a0; border-bottom: 1px solid #fff; padding: 2px 0 0 5px; font-size: 12px; }

/* grids */
.grid { border-collapse: collapse; table-layout: fixed; background: #fff; }
.grid th { font-weight: 400; font-size: 12px; letter-spacing: .6px; height: 23px; padding: 0; background: linear-gradient(#fff, #f4f4f4); border: 1px solid #c4c4c4; }
.grid th.no, .grid td.no { background: linear-gradient(#fff, #ececec); }
.grid td { height: 19px; padding: 0 0 0 1px; border: 1px solid #c4c4c4; white-space: nowrap; overflow: hidden; }
.grid th.hot { background: linear-gradient(#fbdd9f, #eeb35f); color: #7a0b3c; }
.grid td.no { text-align: center; padding: 0; font-family: "Liberation Serif", serif; font-size: 12px; }
.grid .sel td.no { background: #ffd79e; color: #8a1a1a; }
.grid .sel td { background: #deeefc; }
.grid .sel td:nth-child(2) { background: #3f99f5; color: #fff; }
.main-grid { margin: 4px 0 0 1px; width: 344px; }
.c-no { width: 21px; } .c-name { width: 165px; } .c-val { width: 126px; } .c-add { width: 32px; }
.name { padding-left: 21px !important; }
.blue { color: #0808a8; }
.chk { text-align: center; padding: 0 !important; }
.box { width: 13px; height: 13px; margin: 0 auto; background: linear-gradient(135deg, #d6d6d6, #f7f7f7); border: 1px solid #8a8a8a; }

/* section window */
.section-win {
  position: absolute; left: 791px; top: 135px; width: 477px; height: 749px;
  background: linear-gradient(#bccad9 0, #d3dfec 30px, #dbe6f3 100%); border: 1px solid #667; border-right: 0; border-bottom: 0;
  display: flex; flex-direction: column;
}
.sec-title { height: 27px; flex: none; padding: 9px 0 0 7px; color: #333; font-size: 12px; }
.sec-body { flex: 1; min-height: 0; margin-left: 8px; background: #d4dcec; border: 1px solid #9aa5b5; border-right: 0; display: flex; flex-direction: column; }
.sec-tools { height: 29px; flex: none; display: flex; align-items: center; gap: 10px; padding: 2px 0 0 15px; background: #f4f5f8; color: #222; white-space: nowrap; overflow: hidden; }
.sec-tools span { flex: none; }
.sec-sep { margin: 0 -2px 0 -3px; height: 19px; }
.sec-info { height: 26px; flex: none; padding: 0 0 0 2px; }
.info-bar { width: 196px; height: 25px; display: flex; align-items: center; background: #e6e9f1; border: 1px solid #d6d9e2; padding-left: 9px; color: #8a8a8a; gap: 1px; }
.info-label { flex: none; white-space: nowrap; }
.info-combo { width: 136px; flex: none; height: 22px; background: #fff; border: 1px solid #a0a8b5; display: flex; justify-content: flex-end; padding: 2px; }
.info-btn { width: 13px; display: flex; align-items: center; justify-content: center; background: linear-gradient(#fdfdfd, #ddd); border: 1px solid #aaa; }
.canvas { flex: 1; min-height: 0; margin: 1px 0 2px 2px; background: #000; border: 2px solid #d8101c; border-right: 0; overflow: hidden; }
.canvas-svg { display: block; }
.grid-line { fill: none; stroke: #4c4c4c; stroke-width: 1; stroke-dasharray: 14 4 2 4; shape-rendering: crispEdges; }
.cv-small { fill: #555; font: 9px "Liberation Serif", serif; text-anchor: middle; }
.cv-box { fill: none; stroke: #fff; stroke-width: 3; }
.cv-leader { stroke: #fff; stroke-width: 1; }
.cv-bar { fill: none; stroke: #f00; stroke-width: 6.500; }
.cv-c-y circle { fill: #000; stroke: #f6ef1c; stroke-width: 1.600; }
.cv-c-m circle { fill: #000; stroke: #e81fe0; stroke-width: 1.600; }
.cv-n-y text { fill: #d8d020; font: 7px "Liberation Sans", sans-serif; text-anchor: middle; }
.cv-n-m text { fill: #9a1a9a; font: 7px "Liberation Sans", sans-serif; text-anchor: middle; }
.cv-dim { fill: none; stroke: #18e818; stroke-width: 2; }
.cv-green { fill: #19d419; font: 27px "Liberation Serif", serif; text-anchor: middle; }
.cv-white { fill: #fff; font: 27px "Liberation Serif", serif; text-anchor: middle; }
.cv-cut { fill: #fff; font: 20px "Noto Sans CJK SC", sans-serif; }

/* dialog */
.dialog {
  position: absolute; left: 0; top: 158px; width: 758px; height: 594px;
  display: flex; flex-direction: column; padding: 0 6px 6px 7px;
  background: linear-gradient(90deg, rgba(208,229,250,.72), rgba(226,240,253,.82) 50%, rgba(214,232,250,.8));
  -webkit-backdrop-filter: blur(5px); backdrop-filter: blur(5px);
  border: 1px solid #3a3f45; border-radius: 9px 9px 6px 6px;
  box-shadow: 0 2px 14px 2px rgba(0,0,0,.72);
}
.dlg-title { height: 29px; flex: none; display: flex; justify-content: space-between; align-items: center; padding: 0 16px 2px 0; color: #222; }
.dlg-x { display: block; margin-top: -9px; }
.dlg-body {
  flex: 1; min-height: 0; background: #f0f0f0; border: 1px solid #5b6772;
  display: grid; grid-template-columns: 479px 225px; grid-template-rows: auto 1fr; column-gap: 18px;
  padding: 9px 0 0 9px; align-content: start;
}
.dlg-left { display: flex; flex-direction: column; }
.type-row { display: flex; align-items: center; height: 21px; margin: 9px 0 10px; padding-left: 14px; gap: 8px; }
.type-select { width: 145px; height: 21px; display: flex; align-items: center; justify-content: space-between; padding: 0 5px 0 3px; background: linear-gradient(#f8f8f8, #cfcfcf); border: 1px solid #777; border-radius: 3px; }
.big-caret { border-width: 4px; border-top-width: 4px; }
.group { margin: 0; padding: 0; border: 1px solid #dedede; border-radius: 2px; min-width: 0; }
.group legend { padding: 0 1px; margin-left: 4px; line-height: 14px; }
.shapes { width: 479px; height: 465px; }
.shapes-in { display: flex; gap: 6px; padding: 4px 0 0 3px; height: 450px; }
.thumbs { width: 452px; display: grid; grid-template-columns: repeat(3, 148px); grid-auto-rows: 144px; gap: 4px; align-content: start; }
.thumb { border: 1px solid #d9d9d9; border-right-color: #a8a8a8; border-bottom-color: #a8a8a8; padding: 2px 3px; background: #f7f7f7; }
.thumb.on { border: 3px solid #d81010; padding: 0 1px; }
.pic { display: block; width: 140px; height: 139px; background: #008080; }
.pic-big { width: 210px; height: 210px; margin: 4px 0 0 6px; }
.scroll { width: 16px; margin-top: -1px; display: flex; flex-direction: column; align-items: center; background: #f3f3f3; }
.sc-up { margin-top: 6px; border: 4px solid transparent; border-bottom: 4px solid #555; border-top: 0; }
.sc-thumb { width: 16px; height: 249px; margin-top: 6px; display: flex; align-items: center; justify-content: center; background: linear-gradient(90deg, #f5f5f5, #d2d2d2); border: 1px solid #9a9a9a; border-radius: 2px; }
.sc-grip { width: 7px; height: 7px; border-top: 1px solid #666; border-bottom: 1px solid #666; background: linear-gradient(#f3f3f3 40%, #666 40%, #666 60%, #f3f3f3 60%); }
.sc-down { margin-top: auto; margin-bottom: 5px; border: 4px solid transparent; border-top: 4px solid #555; border-bottom: 0; }
.dlg-right { display: flex; flex-direction: column; }
.param-panel { width: 216px; height: 267px; margin-left: 7px; background: #fff; border: 1px solid #c8c8c8; padding: 0 0 0 1px; }
.param-grid { width: 212px; }
.p-no { width: 21px; } .p-name { width: 91px; } .p-val { width: 100px; }
.pn { padding-left: 3px !important; }
.preview { width: 226px; height: 232px; margin-top: 5px; }
.dlg-foot { grid-column: 1 / 3; display: flex; justify-content: flex-end; gap: 15px; padding: 11px 3px 0 0; }
.btn { width: 72px; height: 23px; padding: 0; font: 12px/14px "Noto Sans CJK SC", sans-serif; color: #111; background: linear-gradient(#f5f5f5 50%, #d6d6d6 55%, #e4e4e4); border: 1px solid #777; border-radius: 3px; }

/* thumbnails */
.o { fill: none; stroke: #d8eeee; stroke-width: .8; }
.r { fill: none; stroke: #18f0f0; stroke-width: 1.100; }
.yd { fill: none; stroke: #f2f230; stroke-width: 2.600; stroke-linecap: round; }
.pd { fill: none; stroke: #c020e0; stroke-width: 2.800; stroke-linecap: round; }
.rd { fill: none; stroke: #c01818; stroke-width: 2.600; stroke-linecap: round; }
.ld { fill: none; stroke: #fff; stroke-width: .6; }
.d { fill: none; stroke: #eef; stroke-width: .7; }
.tx, .l, .ti { text-anchor: middle; dominant-baseline: central; font-family: "Noto Sans CJK SC", sans-serif; }
.tx { fill: #fff; font-size: 8px; }
.tx.s { font-size: 6.800px; }
.tx.n { font-size: 8px; font-family: "Liberation Sans", sans-serif; }
.l { fill: #f2ffff; font-size: 9px; font-family: "Liberation Sans", sans-serif; stroke: #008080; stroke-width: 3px; paint-order: stroke; }
.l.big { font-size: 11px; }
.ti { fill: #14f0f0; font-family: "Liberation Sans", sans-serif; font-size: 15px; letter-spacing: 1px; }
.ti-l { font-size: 20px; letter-spacing: 0; stroke: #14f0f0; stroke-width: .4px; }
.ti-m { font-size: 17px; }
.ti-s { font-size: 15px; }
.ti-t { font-size: 11px; }

.arrows { position: absolute; left: 0; top: 0; pointer-events: none; }
```
